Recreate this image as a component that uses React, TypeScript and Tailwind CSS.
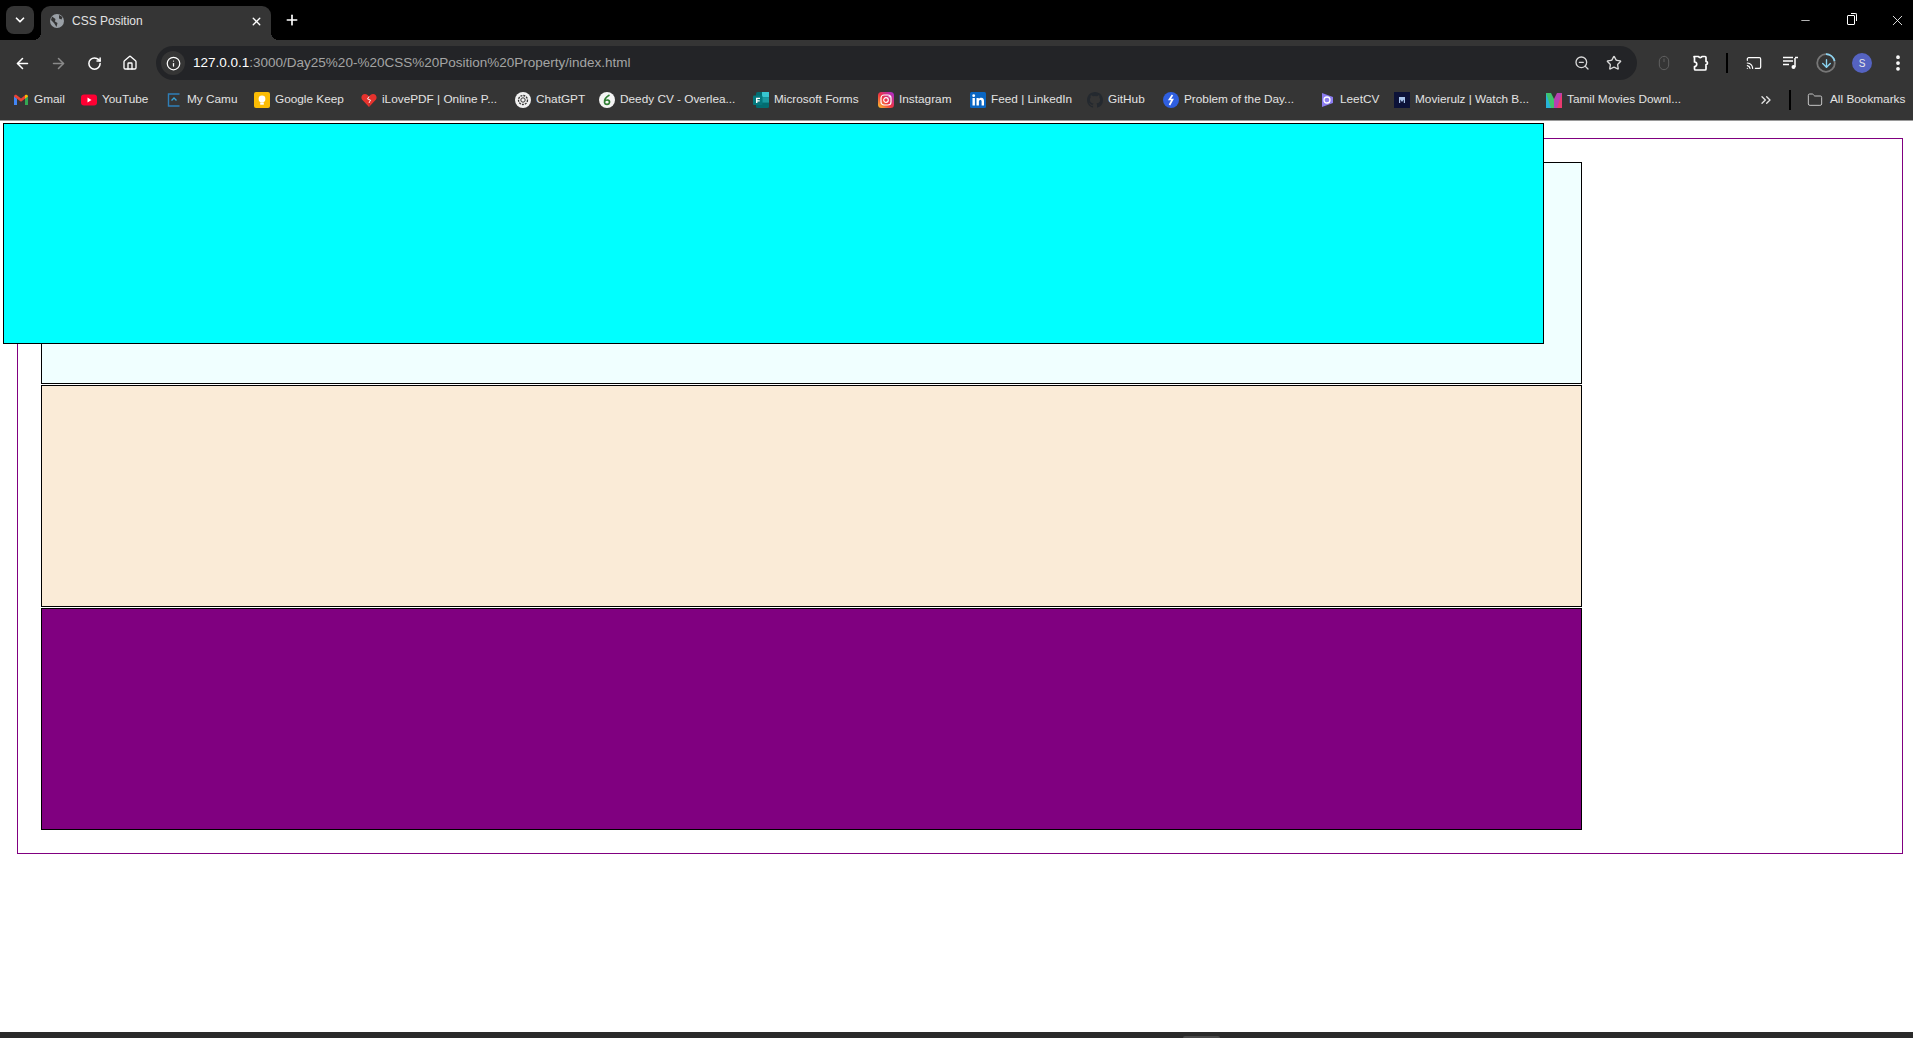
import { ArrowLeft, ArrowRight, ArrowDown, ChevronDown, ChevronsRight, Folder, House, Info, Minus, Mouse, Cast, Plus, RotateCw, Star, X, ZoomOut, EllipsisVertical } from "lucide-react"
import type { ReactNode } from "react"

const GmailIcon = () => (
  <svg width="16" height="16" viewBox="0 0 16 16">
    <path d="M1 4v9h3V6.500z" fill="#4285f4" />
    <path d="M15 4v9h-3V6.500z" fill="#34a853" />
    <path d="M1 4.500C1 3 2.700 2.300 3.800 3.200L8 6.500l4-3.200v3.400L8 9.800 4 6.700 1 4.500z" fill="#ea4335" />
    <path d="M12 3.300c1.200-1 3-.3 3 1.200L12 6.700z" fill="#fbbc04" />
  </svg>
)

const YoutubeIcon = () => (
  <svg width="16" height="16" viewBox="0 0 16 16">
    <rect y="2.500" width="16" height="11" rx="3" fill="#ff0033" />
    <path d="M6.500 5.500 10.500 8l-4 2.500z" fill="#fff" />
  </svg>
)

const CamuIcon = () => (
  <svg width="16" height="16" viewBox="0 0 16 16" fill="none">
    <path d="M13.500 2h-11v12h11" stroke="#2f7fb8" strokeWidth="1.400" />
    <path d="M5.500 8.500 8 6l2.500 2.500" stroke="#38a3d8" strokeWidth="1.400" />
  </svg>
)

const KeepIcon = () => (
  <svg width="16" height="16" viewBox="0 0 16 16">
    <rect width="16" height="16" rx="2" fill="#fbbc04" />
    <circle cx="8" cy="7" r="3.400" fill="#fff" />
    <rect x="6.200" y="10.500" width="3.600" height="2.200" fill="#fff" />
  </svg>
)

const PdfIcon = () => (
  <svg width="16" height="16" viewBox="0 0 16 16">
    <path d="M8 15 1 7.500C-.5 5 1 2 4 2c1.700 0 3 1 4 2.500L6.500 7l3 1L8 15z" fill="#e5322d" />
    <path d="M8 15 15 7.500C16.500 5 15 2 12 2c-1.700 0-3 1-4 2.500L6.500 7l3 1z" fill="#e5322d" />
    <path d="M8 4.500 6.500 7l3 1L8 11" stroke="#fff" strokeWidth="0.900" fill="none" />
  </svg>
)

const GptIcon = () => (
  <svg width="16" height="16" viewBox="0 0 16 16" fill="none">
    <circle cx="8" cy="8" r="8" fill="#f1f1f1" />
    <circle cx="8" cy="8" r="4.500" stroke="#333" strokeWidth="1.300" strokeDasharray="2 1" />
    <circle cx="8" cy="8" r="2.200" stroke="#333" strokeWidth="1" />
  </svg>
)

const DeedyIcon = () => (
  <svg width="16" height="16" viewBox="0 0 16 16" fill="none">
    <circle cx="8" cy="8" r="8" fill="#f4f4f4" />
    <path d="M10.500 3C7 5 5 8 5.500 10.500s4.500 2.500 5 0-3-3.500-5-1" stroke="#2e7d32" strokeWidth="1.600" />
  </svg>
)

const FormsIcon = () => (
  <svg width="16" height="16" viewBox="0 0 16 16">
    <rect x="3" y="0" width="13" height="16" rx="1.500" fill="#036c70" />
    <rect x="9" y="0" width="7" height="5.300" fill="#37c6d0" />
    <rect x="9" y="5.300" width="7" height="5.300" fill="#1a9ba1" />
    <rect x="0" y="3.500" width="9.500" height="9.500" rx="1" fill="#04787d" />
    <path d="M3 5.800h4v1.200H4.400v1.200h2.300v1.200H4.400V11H3z" fill="#fff" />
  </svg>
)

const InstagramIcon = () => (
  <svg width="16" height="16" viewBox="0 0 16 16" fill="none">
    <defs>
      <linearGradient id="ig" x1="0" y1="1" x2="1" y2="0">
        <stop offset="0" stopColor="#fdc830" />
        <stop offset="0.450" stopColor="#f0353f" />
        <stop offset="1" stopColor="#a52bd8" />
      </linearGradient>
    </defs>
    <rect width="16" height="16" rx="3.500" fill="url(#ig)" />
    <rect x="3" y="3" width="10" height="10" rx="3" stroke="#fff" strokeWidth="1.200" />
    <circle cx="8" cy="8" r="2.300" stroke="#fff" strokeWidth="1.200" />
    <circle cx="11.200" cy="4.800" r="0.700" fill="#fff" />
  </svg>
)

const LinkedinIcon = () => (
  <svg width="16" height="16" viewBox="0 0 16 16">
    <rect width="16" height="16" rx="1.500" fill="#0a66c2" />
    <rect x="2.500" y="6" width="2.400" height="7.500" fill="#fff" />
    <circle cx="3.700" cy="3.700" r="1.400" fill="#fff" />
    <path d="M6.500 6h2.300v1.100C9.300 6.300 10.200 5.800 11.300 5.800c2 0 2.700 1.300 2.700 3.300v4.400h-2.400V9.600c0-1-.3-1.700-1.200-1.700S8.900 8.600 8.900 9.600v3.900H6.500z" fill="#fff" />
  </svg>
)

const GithubIcon = () => (
  <svg width="16" height="16" viewBox="0 0 16 16">
    <path
      fill="#24292f"
      d="M8 0C3.580 0 0 3.580 0 8c0 3.540 2.290 6.530 5.470 7.590.4.070.55-.17.550-.38v-1.340c-2.230.48-2.690-1.070-2.690-1.070-.36-.92-.89-1.170-.89-1.170-.73-.5.050-.49.050-.49.800.060 1.230.820 1.230.820.710 1.220 1.870.870 2.330.660.070-.520.280-.870.500-1.070-1.780-.2-3.640-.890-3.640-3.950 0-.870.310-1.590.820-2.150-.080-.200-.360-1.020.080-2.120 0 0 .670-.210 2.200.820a7.600 7.600 0 0 1 4 0c1.530-1.040 2.200-.820 2.200-.820.440 1.100.160 1.920.080 2.120.510.560.820 1.270.820 2.150 0 3.070-1.870 3.750-3.650 3.950.290.250.540.730.540 1.480v2.200c0 .210.150.460.550.380A8.010 8.010 0 0 0 16 8c0-4.420-3.580-8-8-8z"
    />
  </svg>
)

const GfgIcon = () => (
  <svg width="16" height="16" viewBox="0 0 16 16" fill="none">
    <circle cx="8" cy="8" r="8" fill="#2f5fe0" />
    <path d="M9.500 3 6.500 7.500h3L6.500 13" stroke="#fff" strokeWidth="1.700" />
  </svg>
)

const LeetIcon = () => (
  <svg width="16" height="16" viewBox="0 0 16 16" fill="none">
    <path d="M3 1 14 5v6L3 15z" fill="#8b7cf0" />
    <circle cx="8" cy="8" r="3" stroke="#fff" strokeWidth="1.300" />
  </svg>
)

const MovieIcon = () => (
  <svg width="16" height="16" viewBox="0 0 16 16">
    <rect width="16" height="16" fill="#0c1238" />
    <path d="M5 5h6v6h-1.200V7.500L8 10 6.200 7.500V11H5z" fill="#a9c4ea" />
  </svg>
)

const TamilIcon = () => (
  <svg width="16" height="16" viewBox="0 0 16 16">
    <rect x="0" y="1" width="5" height="15" fill="#27b4d8" />
    <path d="M0 1h5l3 6v9H5z" fill="#3ec26b" />
    <rect x="11" y="1" width="5" height="15" fill="#ea3a6f" />
    <path d="M16 1h-5L8 7v9h3z" fill="#b640b0" />
  </svg>
)

const PuzzleIcon = () => (
  <svg width="18" height="18" viewBox="0 0 18 18" fill="none" stroke="#fff" strokeWidth="1.700" strokeLinejoin="round">
    <path d="M3 2.500h4.500a2 2 0 0 0 3.500 0H14a1 1 0 0 1 1 1V7.500a1.500 1.500 0 0 1 0 3V15a1 1 0 0 1-1 1H4.500a1 1 0 0 1-1-1v-2.500a2.200 2.200 0 0 0 0-4.500V3.500A1 1 0 0 1 3 2.500z" />
  </svg>
)

const MediaIcon = () => (
  <svg width="18" height="18" viewBox="0 0 18 18" fill="none" stroke="#fff">
    <path d="M2 3.500h10M2 7h10M2 10.500h6" strokeWidth="1.500" />
    <path d="M14 4v9" strokeWidth="1.500" />
    <path d="M14 3.500h3" strokeWidth="1.500" />
    <circle cx="12.500" cy="13" r="2" fill="#fff" stroke="none" />
  </svg>
)

const bookmarks: { label: string; icon: ReactNode; width: string }[] = [
  { label: "Gmail", icon: <GmailIcon />, width: "w-[68px]" },
  { label: "YouTube", icon: <YoutubeIcon />, width: "w-[85px]" },
  { label: "My Camu", icon: <CamuIcon />, width: "w-[88px]" },
  { label: "Google Keep", icon: <KeepIcon />, width: "w-[107px]" },
  { label: "iLovePDF | Online P...", icon: <PdfIcon />, width: "w-[154px]" },
  { label: "ChatGPT", icon: <GptIcon />, width: "w-[84px]" },
  { label: "Deedy CV - Overlea...", icon: <DeedyIcon />, width: "w-[154px]" },
  { label: "Microsoft Forms", icon: <FormsIcon />, width: "w-[125px]" },
  { label: "Instagram", icon: <InstagramIcon />, width: "w-[92px]" },
  { label: "Feed | LinkedIn", icon: <LinkedinIcon />, width: "w-[117px]" },
  { label: "GitHub", icon: <GithubIcon />, width: "w-[76px]" },
  { label: "Problem of the Day...", icon: <GfgIcon />, width: "w-[156px]" },
  { label: "LeetCV", icon: <LeetIcon />, width: "w-[75px]" },
  { label: "Movierulz | Watch B...", icon: <MovieIcon />, width: "w-[152px]" },
  { label: "Tamil Movies Downl...", icon: <TamilIcon />, width: "w-[212px]" },
]

function ToolButton({ children }: { children: ReactNode }) {
  return <div className="flex h-[34px] w-[36px] shrink-0 items-center justify-center">{children}</div>
}

function DownloadRing() {
  return (
    <div className="relative flex h-[20px] w-[20px] items-center justify-center">
      <svg width="20" height="20" viewBox="0 0 20 20" fill="none" className="absolute inset-0">
        <circle cx="10" cy="10" r="8.800" stroke="#777" strokeWidth="1.800" />
        <path d="M10 1.200A8.800 8.800 0 0 1 18.600 8" stroke="#8ad4f2" strokeWidth="1.800" />
      </svg>
      <ArrowDown size={13} strokeWidth={2.500} className="text-[#8ad4f2]" />
    </div>
  )
}

function BoxRow({ color }: { color: string }) {
  return <div className={`h-[222px] w-[1541px] border border-black ${color}`} />
}

export default function App() {
  return (
    <div className="flex h-[1038px] w-[1913px] flex-col overflow-hidden bg-white font-['Liberation_Sans',sans-serif]">
      {/* title strip */}
      <div className="flex h-[40px] shrink-0 items-start bg-black pl-[6px] pt-[6px]">
        <div className="flex h-[28px] w-[28px] items-center justify-center rounded-lg bg-[#353535]">
          <ChevronDown size={14} strokeWidth={3} className="text-white" />
        </div>
        <div className="relative ml-[7px] flex h-[34px] w-[230px] items-center rounded-t-[9px] bg-[#353535] pb-[4px] pl-[8px] pr-[8px]">
          <div className="absolute -left-[8px] bottom-0 h-[8px] w-[8px] bg-[radial-gradient(circle_at_0_0,transparent_8px,#353535_8px)]" />
          <div className="absolute -right-[8px] bottom-0 h-[8px] w-[8px] bg-[radial-gradient(circle_at_100%_0,transparent_8px,#353535_8px)]" />
          <svg width="16" height="16" viewBox="0 0 16 16">
            <circle cx="8" cy="8" r="7" fill="#9aa0a6" />
            <path d="M3 3.500 6.500 6 6 8.500 8.500 10l-1 4L5 10 2 7zM10 2l3.500 2-1 2.500-2.500-1z" fill="#353535" />
          </svg>
          <span className="ml-[7px] text-[12px] text-[#e3e3e3]">CSS Position</span>
          <X size={13} strokeWidth={2.500} className="ml-auto text-white" />
        </div>
        <Plus size={16} strokeWidth={2.500} className="ml-[13px] mt-[6px] text-white" />
        <div className="ml-auto mr-[-7px] mt-[8px] flex items-center">
          <div className="flex h-[12px] w-[46px] items-center justify-center">
            <Minus size={13} strokeWidth={1.300} className="text-white" />
          </div>
          <div className="flex h-[12px] w-[46px] items-center justify-center">
            <div className="relative h-[10px] w-[8px] rounded-[1px] border border-white">
              <div className="absolute -right-[3px] -top-[3px] h-[8px] w-[6px] rounded-tr-[2px] border-r border-t border-white" />
            </div>
          </div>
          <div className="flex h-[12px] w-[46px] items-center justify-center">
            <X size={17} strokeWidth={1.200} className="text-white" />
          </div>
        </div>
      </div>

      {/* toolbar */}
      <div className="flex h-[46px] shrink-0 items-center bg-[#353535] pl-[4px]">
        <ToolButton>
          <ArrowLeft size={17} strokeWidth={2.200} className="text-white" />
        </ToolButton>
        <ToolButton>
          <ArrowRight size={17} strokeWidth={2.200} className="text-[#8a8a8a]" />
        </ToolButton>
        <ToolButton>
          <RotateCw size={15} strokeWidth={2.400} className="text-white" />
        </ToolButton>
        <ToolButton>
          <House size={16} strokeWidth={2} className="text-white" />
        </ToolButton>
        <div className="ml-[8px] flex h-[34px] w-[1481px] shrink-0 items-center rounded-full bg-[#232427] pl-[5px] pr-[14px]">
          <div className="flex h-[24px] w-[24px] items-center justify-center rounded-full bg-[#353535]">
            <Info size={15} strokeWidth={2} className="text-white" />
          </div>
          <div className="ml-[8px] text-[13.5px] text-[#a4a4a4]">
            <span className="text-white">127.0.0.1</span>:3000/Day25%20-%20CSS%20Position%20Property/index.html
          </div>
          <ZoomOut size={16} strokeWidth={2} className="ml-auto text-[#d8d8d8]" />
          <Star size={16} strokeWidth={2} className="ml-[16px] mr-[1px] text-[#d8d8d8]" />
        </div>
        <div className="ml-[9px] flex items-center">
          <ToolButton>
            <Mouse size={16} strokeWidth={1.500} className="text-[#5f5f5f]" />
          </ToolButton>
          <ToolButton>
            <PuzzleIcon />
          </ToolButton>
          <div className="flex h-[20px] w-[18px] shrink-0 items-center justify-center">
            <div className="h-[20px] w-[2px] bg-black" />
          </div>
          <ToolButton>
            <Cast size={16} strokeWidth={1.800} className="text-white" />
          </ToolButton>
          <ToolButton>
            <MediaIcon />
          </ToolButton>
          <ToolButton>
            <DownloadRing />
          </ToolButton>
          <ToolButton>
            <div className="flex h-[20px] w-[20px] items-center justify-center rounded-full bg-[#5563c1] text-[10px] text-[#e8e8e8]">S</div>
          </ToolButton>
          <div className="flex h-[34px] w-[33px] shrink-0 items-center pl-[8px]">
            <EllipsisVertical size={20} strokeWidth={2.500} className="text-white" />
          </div>
        </div>
      </div>

      {/* bookmarks */}
      <div className="flex h-[35px] shrink-0 items-center border-b border-[#9a9a9a] bg-[#353535] pb-[6px] pl-[13px]">
        {bookmarks.map((b) => (
          <div key={b.label} className={`flex shrink-0 items-center gap-[5px] ${b.width}`}>
            <div className="h-[16px] w-[16px] shrink-0">{b.icon}</div>
            <span className="whitespace-nowrap text-[11.8px] text-[#e3e3e3]">{b.label}</span>
          </div>
        ))}
        <ChevronsRight size={16} strokeWidth={2} className="text-[#e3e3e3]" />
        <div className="ml-[15px] h-[20px] w-[2px] bg-black" />
        <Folder size={16} strokeWidth={1.500} className="ml-[16px] text-[#c4c4c4]" />
        <span className="ml-[7px] whitespace-nowrap text-[11.8px] text-[#e3e3e3]">All Bookmarks</span>
      </div>

      {/* page */}
      <div className="flex-1 bg-white pl-[17px] pt-[17px]">
        <div className="flex h-[716px] w-[1886px] flex-col gap-[1px] border border-[#800080] pl-[23px] pt-[23px]">
          <div className="relative">
            <BoxRow color="bg-[#f0ffff]" />
            <div className="absolute -left-[38px] -top-[39px] h-[221px] w-[1541px] border border-black bg-[#00ffff]" />
          </div>
          <BoxRow color="bg-[#faebd7]" />
          <BoxRow color="bg-[#800080]" />
        </div>
      </div>

      {/* taskbar edge */}
      <div className="flex h-[6px] shrink-0 items-end bg-[#2a2a2a] pl-[1183px]">
        <div className="h-[2px] w-[37px] rounded-t-sm bg-[#4a4a4a]" />
      </div>
    </div>
  )
}
